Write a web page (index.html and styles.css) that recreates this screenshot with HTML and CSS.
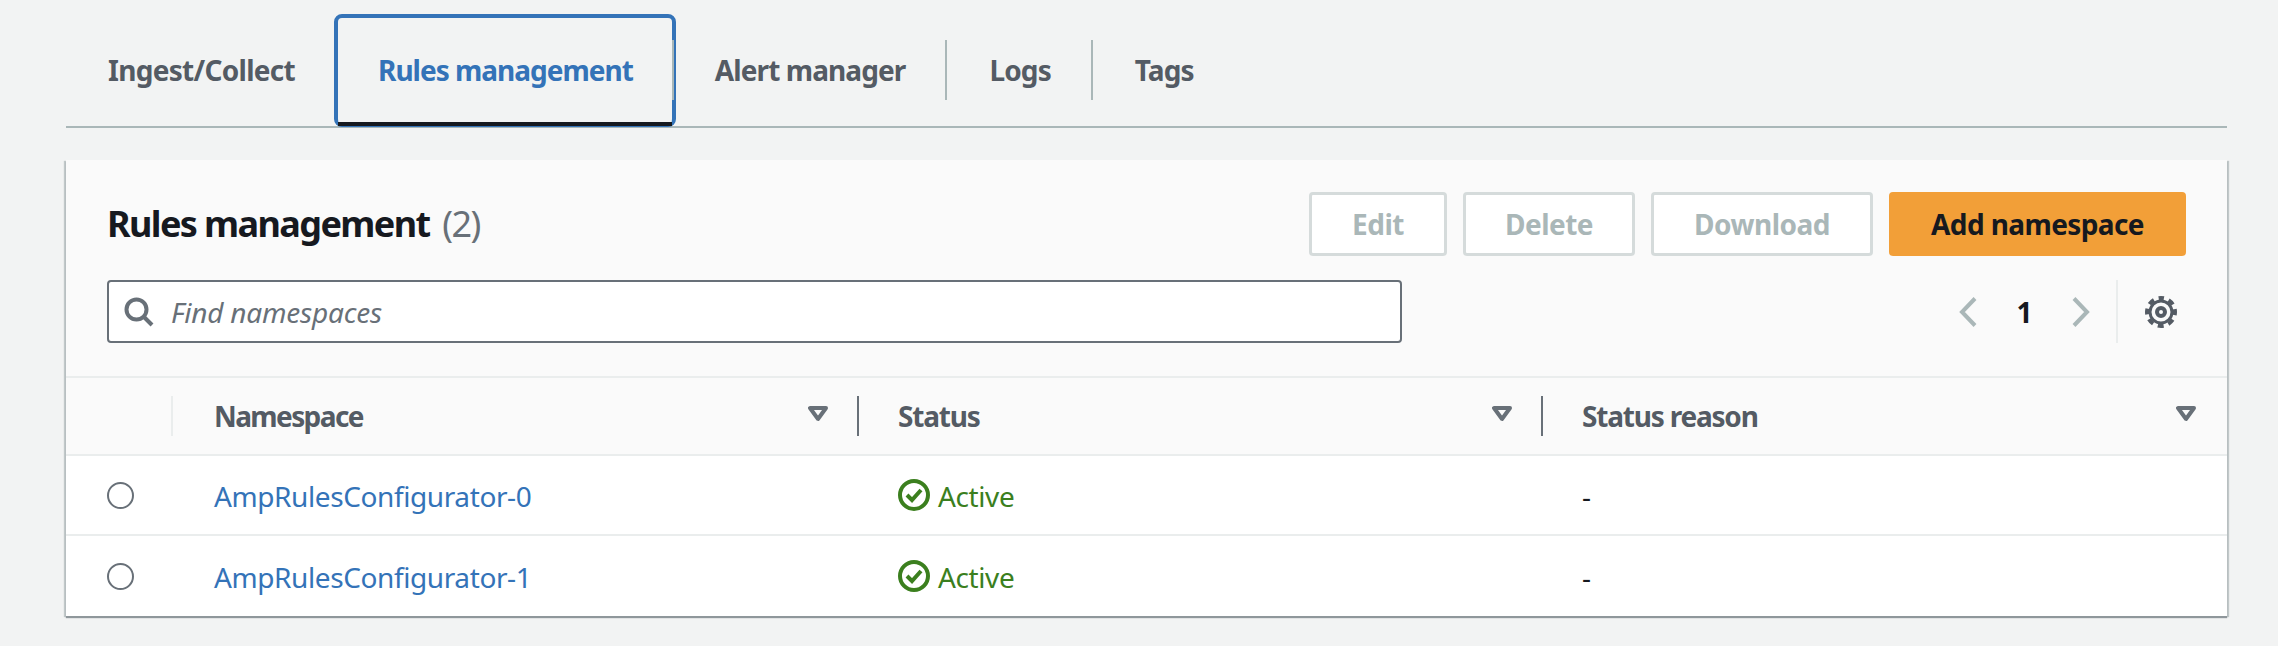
FILE: index.html
```html
<!DOCTYPE html>
<html lang="en">
<head>
    <meta charset="UTF-8">
    <title>Rules management</title>
    <link rel="stylesheet" href="styles.css">
</head>
<body>
    <div class="tabs">
        <div class="tab tab-first">Ingest/Collect</div>
        <div class="tab tab-active">Rules management</div>
        <div class="tab tab-sep tab-alert">Alert manager</div>
        <div class="tab tab-sep">Logs</div>
        <div class="tab">Tags</div>
    </div>

    <div class="panel">
        <div class="panel-header">
            <div class="title-row">
                <h2 class="title">Rules management <span class="count">(2)</span></h2>
                <div class="actions">
                    <button class="btn btn-edit">Edit</button>
                    <button class="btn btn-delete">Delete</button>
                    <button class="btn btn-download">Download</button>
                    <button class="btn btn-primary">Add namespace</button>
                </div>
            </div>
            <div class="filter-row">
                <div class="search">
                    <svg class="search-icon" viewBox="0 0 30 30" width="30" height="30">
                        <circle cx="12.5" cy="12.5" r="10" fill="none" stroke="#687078" stroke-width="4"/>
                        <path d="M20 20l8 8" stroke="#687078" stroke-width="4" fill="none"/>
                    </svg>
                    <span class="placeholder">Find namespaces</span>
                </div>
                <div class="pager">
                    <svg class="chevron" viewBox="0 0 19 30" width="19" height="30">
                        <path d="M16 1.5L3 15l13 13.5" fill="none" stroke="#aab7b8" stroke-width="4"/>
                    </svg>
                    <span class="page-num">1</span>
                    <svg class="chevron" viewBox="0 0 19 30" width="19" height="30">
                        <path d="M3 1.5L16 15 3 28.5" fill="none" stroke="#aab7b8" stroke-width="4"/>
                    </svg>
                </div>
                <div class="settings">
                    <svg viewBox="0 0 32 32" width="32" height="32">
                        <circle cx="16" cy="16" r="11" fill="none" stroke="#545b64" stroke-width="3"/>
                        <circle cx="16" cy="16" r="14" fill="none" stroke="#545b64" stroke-width="4" stroke-dasharray="6 5" stroke-dashoffset="3" transform="rotate(-90 16 16)"/>
                        <circle cx="16" cy="16" r="4" fill="none" stroke="#545b64" stroke-width="4"/>
                    </svg>
                </div>
            </div>
        </div>

        <div class="row head">
            <div class="cell cell-select"></div>
            <div class="cell cell-name">Namespace<svg class="sort" viewBox="0 0 20 16" width="20" height="16"><path d="M2 2h16l-8 11z" fill="none" stroke="#687078" stroke-width="4" stroke-linejoin="round"/></svg></div>
            <div class="cell cell-line">Status<svg class="sort" viewBox="0 0 20 16" width="20" height="16"><path d="M2 2h16l-8 11z" fill="none" stroke="#687078" stroke-width="4" stroke-linejoin="round"/></svg></div>
            <div class="cell cell-line">Status reason<svg class="sort" viewBox="0 0 20 16" width="20" height="16"><path d="M2 2h16l-8 11z" fill="none" stroke="#687078" stroke-width="4" stroke-linejoin="round"/></svg></div>
        </div>

        <div class="row body-row">
            <div class="cell cell-select"><span class="radio"></span></div>
            <div class="cell"><a class="link">AmpRulesConfigurator-0</a></div>
            <div class="cell status">
                <svg viewBox="0 0 32 32" width="32" height="32"><circle cx="16" cy="16" r="14" fill="none" stroke="#3b7f1e" stroke-width="4"/><path d="M9 16l5 5 9-10" fill="none" stroke="#3b7f1e" stroke-width="4"/></svg>
                Active
            </div>
            <div class="cell">-</div>
        </div>
        <div class="row body-row">
            <div class="cell cell-select"><span class="radio"></span></div>
            <div class="cell"><a class="link">AmpRulesConfigurator-1</a></div>
            <div class="cell status">
                <svg viewBox="0 0 32 32" width="32" height="32"><circle cx="16" cy="16" r="14" fill="none" stroke="#3b7f1e" stroke-width="4"/><path d="M9 16l5 5 9-10" fill="none" stroke="#3b7f1e" stroke-width="4"/></svg>
                Active
            </div>
            <div class="cell">-</div>
        </div>
    </div>
</body>
</html>
```
FILE: styles.css
```css
body {
    box-sizing: border-box;
    min-height: 100vh;
    margin: 0;
    padding: 14px 51px 30px 66px;
    background-color: #f2f3f3;
    font-family: "Noto Sans", Arial, sans-serif;
    font-size: 28px;
    color: #16191f;
}

/* tabs */
.tabs {
    display: flex;
    height: 112px;
    border-bottom: 2px solid #aab7b8;
}

.tab {
    position: relative;
    box-sizing: border-box;
    height: 112px;
    padding: 0 42px;
    display: flex;
    align-items: center;
    font-weight: 700;
    color: #545b64;
    letter-spacing: -0.9px;
    white-space: nowrap;
}

.tab-first {
    padding-right: 39px;
    letter-spacing: -0.7px;
}

.tab-alert {
    padding-left: 39px;
}

.tab-sep::after,
.tab-active::after {
    content: "";
    position: absolute;
    right: 0;
    top: 26px;
    height: 60px;
    width: 2px;
    background: #aab7b8;
}

.tab-active {
    height: 113px;
    padding: 0 39px 5px 40px;
    color: #3473b8;
    border: 4px solid #3473b8;
    border-bottom-width: 1px;
    border-radius: 8px;
    letter-spacing: -1px;
}

.tab-active::after {
    right: -2px;
    top: 22px;
}

.tab-active::before {
    content: "";
    position: absolute;
    left: 0;
    right: 0;
    bottom: 0;
    height: 4px;
    background: #16191f;
}

/* panel */
.panel {
    margin-top: 32px;
    background: white;
    box-shadow: 0 2px 1px 0 #8f979b, 2px 1px 1px 0 rgba(0, 28, 36, 0.2), -2px 1px 1px 0 rgba(0, 28, 36, 0.2);
}

.panel-header {
    background: #fafafa;
    padding: 32px 41px 33px;
    border-bottom: 2px solid #eaeded;
}

.title-row {
    display: flex;
    justify-content: space-between;
    align-items: center;
    height: 64px;
}

.title {
    margin: 0 0 2px;
    font-size: 36px;
    font-weight: 700;
    letter-spacing: -1.6px;
}

.count {
    margin-left: 5px;
    font-weight: 400;
    color: #687078;
}

.actions {
    display: flex;
    gap: 16px;
}

.btn {
    box-sizing: border-box;
    height: 64px;
    border: 3px solid #d5dbdb;
    border-radius: 4px;
    background: white;
    color: #aab7b8;
    font-family: inherit;
    font-size: 28px;
    font-weight: 700;
    letter-spacing: -0.5px;
    padding: 0;
}

.btn-edit { width: 138px; }
.btn-delete { width: 172px; }
.btn-download { width: 222px; }

.btn-primary {
    width: 297px;
    background: #f29f38;
    border-color: #f29f38;
    color: #16191f;
    letter-spacing: -0.6px;
}

.filter-row {
    display: flex;
    align-items: center;
    margin-top: 24px;
    height: 63px;
}

.search {
    box-sizing: border-box;
    width: 1295px;
    height: 63px;
    border: 2px solid #687078;
    border-radius: 4px;
    background: white;
    display: flex;
    align-items: center;
    padding-left: 15px;
    gap: 17px;
}

.placeholder {
    font-style: italic;
    color: #687078;
    letter-spacing: -0.2px;
}

.pager {
    display: flex;
    align-items: center;
    margin-left: auto;
}

.page-num {
    width: 93px;
    text-align: center;
    font-weight: 700;
}

.settings {
    margin-left: 26px;
    padding-left: 27px;
    padding-right: 9px;
    height: 63px;
    border-left: 2px solid #eaeded;
    display: flex;
    align-items: center;
}

/* table */
.row {
    display: grid;
    grid-template-columns: 107px 684px 684px 1fr;
    align-items: center;
}

.head {
    height: 76px;
    background: #fafafa;
    border-bottom: 2px solid #eaeded;
    font-weight: 700;
    color: #545b64;
    letter-spacing: -1.2px;
}

.head .cell-name {
    letter-spacing: -1.6px;
}

.body-row {
    height: 78px;
    border-bottom: 2px solid #eaeded;
    letter-spacing: -0.4px;
}

.body-row:last-child {
    height: 80px;
    border-bottom: none;
}

.body-row .cell {
    padding-top: 2px;
}

.cell {
    display: flex;
    align-items: center;
    padding-left: 41px;
}

.head .cell {
    position: relative;
    height: 40px;
}

.head .cell-select {
    border-right: 2px solid #eaeded;
    box-sizing: border-box;
}

.head .cell-line {
    border-left: 2px solid #687078;
    padding-left: 39px;
}

.sort {
    position: absolute;
    right: 29px;
    top: 10px;
}

.head .cell:last-child .sort {
    right: 31px;
}

.radio {
    box-sizing: border-box;
    width: 27px;
    height: 27px;
    margin-top: -2px;
    border: 2px solid #687078;
    border-radius: 50%;
    background: white;
}

.link {
    color: #3473b8;
}

.status {
    color: #3b7f1e;
    gap: 8px;
}

.status svg {
    margin-top: -2px;
}
```
